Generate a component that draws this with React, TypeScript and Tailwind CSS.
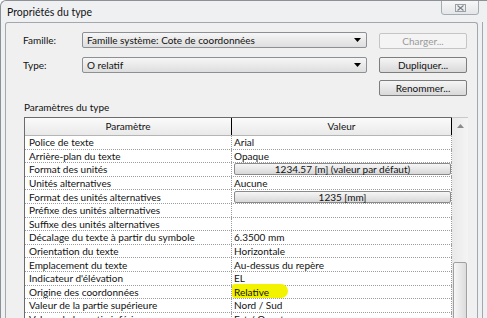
import React from "react";

const rows: { p: string; v?: string; btn?: string; hl?: boolean }[] = [
  { p: "Police de texte", v: "Arial" },
  { p: "Arrière-plan du texte", v: "Opaque" },
  { p: "Format des unités", btn: "1234.57 [m] (valeur par défaut)" },
  { p: "Unités alternatives", v: "Aucune" },
  { p: "Format des unités alternatives", btn: "1235 [mm]" },
  { p: "Préfixe des unités alternatives", v: "" },
  { p: "Suffixe des unités alternatives", v: "" },
  { p: "Décalage du texte à partir du symbole", v: "6.3500 mm" },
  { p: "Orientation du texte", v: "Horizontale" },
  { p: "Emplacement du texte", v: "Au-dessus du repère" },
  { p: "Indicateur d'élévation", v: "EL" },
  { p: "Origine des coordonnées", v: "Relative", hl: true },
  { p: "Valeur de la partie supérieure", v: "Nord / Sud" },
  { p: "Valeur de la partie inférieure", v: "Est / Ouest" },
];

function Dropdown({ text }: { text: string }) {
  return (
    <div className="w-[285px] h-[16px] flex items-center rounded-[2px] border border-[#8c8f94] bg-gradient-to-b from-[#f6f6f6] to-[#dedede] pl-[4px] pr-[5px]">
      <span className="flex-1 leading-none whitespace-nowrap">{text}</span>
      <svg width="7" height="4" viewBox="0 0 7 4">
        <path d="M0 0 L7 0 L3.5 4 Z" fill="#000" />
      </svg>
    </div>
  );
}

function Btn({ text, disabled }: { text: string; disabled?: boolean }) {
  return (
    <div
      className={
        disabled
          ? "w-[88px] h-[16px] flex items-center justify-center rounded-[2px] border border-[#c5c5c5] bg-[#f4f4f4] text-[#9a9a9a] leading-none"
          : "w-[88px] h-[16px] flex items-center justify-center rounded-[2px] border border-[#7d7d7d] bg-gradient-to-b from-[#f5f5f5] to-[#d9d9d9] leading-none"
      }
    >
      {text}
    </div>
  );
}

export default function App() {
  return (
    <div className="w-[487px] h-[318px] overflow-hidden bg-[#eef0f2] flex flex-col border-l border-t border-[#8d9196] rounded-tl-[6px] font-['Lato','Noto_Sans',sans-serif] text-[10px] text-[#111]">
      <div className="h-[21px] flex items-start justify-between shrink-0">
        <div className="pl-[6px] pt-[6px] text-[10.5px] leading-none">Propriétés du type</div>
        <div className="mr-[8px] mt-[-1px] w-[38px] h-[15px] rounded-b-[3px] border border-[#a6abb1] bg-gradient-to-b from-[#f7f7f7] to-[#e4e6e9] flex items-center justify-center">
          <svg width="11" height="8" viewBox="0 0 11 8">
            <rect x="0.5" y="0.5" width="10" height="7" fill="none" stroke="#9aa0a6" />
            <path d="M2.5 1.5 L8.5 6.5 M8.5 1.5 L2.5 6.5" stroke="#7d838a" strokeWidth="1.2" />
          </svg>
        </div>
      </div>
      <div className="flex-1 flex">
        <div className="ml-[4px] w-[473px] border-l border-t border-r border-[#a3a8ae] rounded-t-[3px] bg-[#f0f0f0] flex flex-col">
          <div className="pt-[9px] pl-[17px] flex items-start h-[26px]">
            <div className="w-[59px] h-[16px] flex items-center">Famille:</div>
            <Dropdown text="Famille système: Cote de coordonnées" />
            <div className="ml-[12px] mt-[1px]">
              <Btn text="Charger..." disabled />
            </div>
          </div>
          <div className="mt-[8px] pl-[17px] flex items-start h-[17px]">
            <div className="w-[59px] h-[16px] flex items-center">Type:</div>
            <Dropdown text="O relatif" />
            <div className="ml-[12px]">
              <Btn text="Dupliquer..." />
            </div>
          </div>
          <div className="mt-[6px] pl-[373px] flex">
            <Btn text="Renommer..." />
          </div>
          <div className="mt-[4px] pl-[18px] h-[14px] leading-[14px]">Paramètres du type</div>
          <div className="mt-[3px] ml-[18px] w-[444px] flex flex-1">
            <div className="w-[428px] border-l border-[#6b6b6b] flex flex-col">
              <div className="h-[19px] flex border-t border-b border-[#6b6b6b] border-b-[#b5b5b5] bg-gradient-to-b from-[#fbfbfb] to-[#e9e9e9]">
                <div className="w-[207px] border-r border-black flex items-center justify-center">Paramètre</div>
                <div className="w-[220px] border-r border-black flex items-center justify-center">Valeur</div>
              </div>
              <div className="bg-white flex-1">
                {rows.map((r, i) => (
                  <div key={i} className="h-[13.6px] flex border-b border-dotted border-[#9c9c9c]">
                    <div className="w-[207px] border-r border-dotted border-[#9c9c9c] pl-[4px] flex items-center whitespace-nowrap leading-none">
                      {r.p}
                    </div>
                    <div className="w-[220px] border-r border-dotted border-[#9c9c9c] pl-[2px] flex items-center whitespace-nowrap leading-none relative">
                      {r.btn ? (
                        <div className="w-[217px] h-[12px] flex items-center justify-center rounded-[2px] border border-[#8a8a8a] bg-gradient-to-b from-[#f6f6f6] to-[#d8d8d8] leading-none">
                          {r.btn}
                        </div>
                      ) : r.hl ? (
                        <>
                          <span className="absolute left-[0px] top-[-2px] w-[56px] h-[14px] rounded-l-[3px] rounded-r-[7px] bg-[#f3f300]" />
                          <span className="relative">{r.v}</span>
                        </>
                      ) : (
                        r.v
                      )}
                    </div>
                  </div>
                ))}
              </div>
            </div>
            <div className="w-[16px] flex flex-col border-t border-[#c8c8c8] bg-gradient-to-r from-[#e9e9e9] to-[#f4f4f4]">
              <div className="h-[16px] flex items-center justify-center">
                <svg width="7" height="4" viewBox="0 0 7 4">
                  <path d="M0 4 L7 4 L3.5 0 Z" fill="#8a8a8a" />
                </svg>
              </div>
              <div className="h-[128px]" />
              <div className="flex-1 mx-[1px] rounded-[2px] border border-[#a0a0a0] bg-gradient-to-r from-[#f6f6f6] to-[#dcdcdc]" />
            </div>
          </div>
        </div>
        <div className="w-[9px] flex">
          <div className="ml-[4px] w-[1px] bg-[#a3a8ae]" />
        </div>
      </div>
    </div>
  );
}
